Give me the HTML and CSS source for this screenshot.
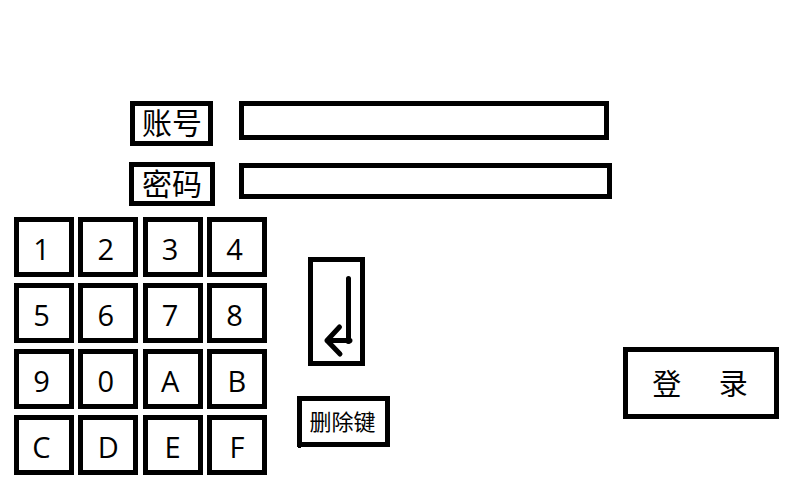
FILE: index.html
```
<!DOCTYPE html>
<html lang="zh-CN">
<head>
<meta charset="utf-8">
<meta name="viewport" content="width=device-width, initial-scale=1">
<title>登录</title>
<link rel="stylesheet" href="styles.css">
</head>
<body>
<form class="login">
  <div class="fields">
    <div class="field field-account">
      <label class="box label" for="account">账号</label>
      <input class="box input" id="account" type="text">
    </div>
    <div class="field field-password">
      <label class="box label" for="password">密码</label>
      <input class="box input" id="password" type="password">
    </div>
  </div>
  <div class="controls">
    <div class="keypad">
      <button class="box key" type="button">1</button>
      <button class="box key" type="button">2</button>
      <button class="box key" type="button">3</button>
      <button class="box key" type="button">4</button>
      <button class="box key" type="button">5</button>
      <button class="box key" type="button">6</button>
      <button class="box key" type="button">7</button>
      <button class="box key" type="button">8</button>
      <button class="box key" type="button">9</button>
      <button class="box key" type="button">0</button>
      <button class="box key" type="button">A</button>
      <button class="box key key-hex" type="button">B</button>
      <button class="box key" type="button">C</button>
      <button class="box key key-hex" type="button">D</button>
      <button class="box key key-hex" type="button">E</button>
      <button class="box key key-hex" type="button">F</button>
    </div>
    <div class="actions">
      <button class="box enter" type="button" aria-label="确认">
        <svg class="arrow" viewBox="0 0 47 99" aria-hidden="true">
          <path d="M35.5 16.5V79M37 78.500H14M26.500 65L14 78.500L27 92" fill="none" stroke="#000" stroke-width="5" stroke-linecap="round" stroke-linejoin="round"/>
          <circle cx="35.500" cy="79" r="3"/>
        </svg>
      </button>
      <button class="box delete" type="button">删除键</button>
    </div>
    <button class="box submit" type="submit">登     录</button>
  </div>
</form>
</body>
</html>
```
FILE: styles.css
```
* {
  box-sizing: border-box;
}

body {
  margin: 0;
  background: #fff;
  color: #000;
  font-family: "Open Sans", "Noto Sans CJK SC", sans-serif;
}

.login {
  display: flex;
  flex-direction: column;
  gap: 11px;
  padding-top: 101px;
}

.box {
  margin: 0;
  padding: 0;
  border: 5px solid #000;
  border-radius: 0;
  background: #fff;
  color: #000;
  font-family: inherit;
}

.fields {
  display: flex;
  flex-direction: column;
  gap: 16px;
  padding: 0 188px 0 129px;
}

.field {
  display: flex;
}

.field-account {
  align-items: flex-start;
  gap: 26px;
  padding: 0 3px 0 1px;
}

.field-password {
  align-items: center;
  gap: 24px;
}

.label {
  padding: 0 7px;
  font-size: 30px;
  line-height: 34px;
  white-space: nowrap;
}

.field-account .label {
  width: 83px;
  height: 45px;
}

.field-password .label {
  width: 86px;
  height: 44px;
  padding: 0 8px;
}

.input {
  flex: 1;
  min-width: 0;
  height: 39px;
  padding: 0 8px;
  font-size: 20px;
}

.field-password .input {
  height: 36px;
  margin-bottom: 6px;
}

.controls {
  display: flex;
  align-items: flex-start;
  padding: 0 21px 0 14px;
}

.keypad {
  display: grid;
  grid-template-columns: repeat(4, 60px);
  grid-auto-rows: 60px;
  justify-content: space-between;
  row-gap: 6px;
  width: 253px;
}

.key {
  padding: 4px 5px 0 0;
  font-size: 29px;
  line-height: 30px;
}

.key-hex {
  padding-right: 0;
}

.actions {
  display: flex;
  flex-direction: column;
  align-items: flex-start;
  gap: 30px;
  margin: 40px 0 0 30px;
}

.enter {
  width: 57px;
  height: 109px;
  margin-left: 11px;
}

.arrow {
  display: block;
  width: 47px;
  height: 99px;
}

.delete {
  position: relative;
  width: 93px;
  height: 51px;
  padding: 0 2px 4px 0;
  font-size: 22px;
}

.delete::after {
  content: "";
  position: absolute;
  left: -4px;
  bottom: -6px;
  width: 3px;
  height: 1px;
  background: #000;
}

.submit {
  width: 156px;
  height: 72px;
  margin: 130px 0 0 auto;
  padding: 2px 2px 0 0;
  font-size: 29px;
  line-height: 30px;
  white-space: pre;
}
```
